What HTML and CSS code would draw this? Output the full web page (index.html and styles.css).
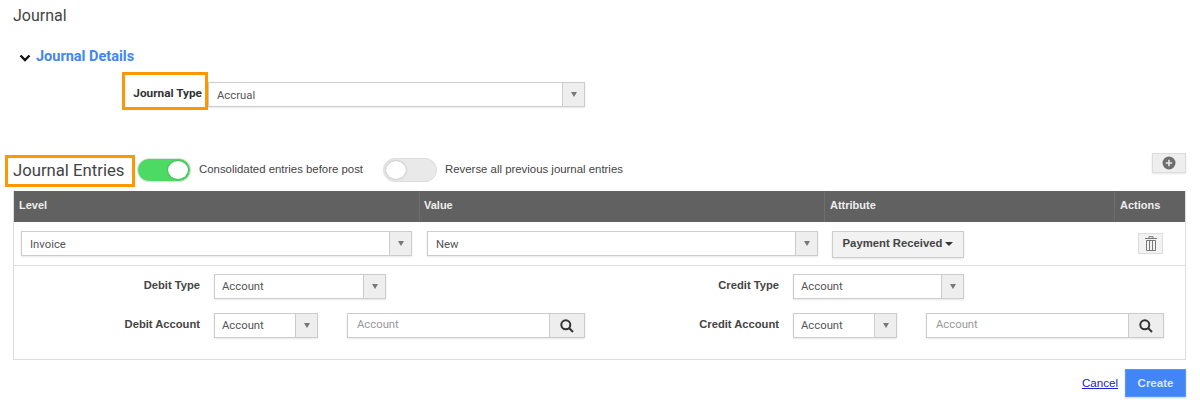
FILE: index.html
```html
<!DOCTYPE html>
<html lang="en">
<head>
<meta charset="utf-8">
<title>Journal</title>
<link rel="stylesheet" href="styles.css">
</head>
<body>
<main class="page">
  <h1 class="title">Journal</h1>
  <h2 class="section-title">
    <svg class="chevron" width="12" height="8" viewBox="0 0 12 8"><path d="M1.500 1.500 6 6l4.500-4.500" fill="none" stroke="#111" stroke-width="2.400"/></svg>
    <span>Journal Details</span>
  </h2>
  <div class="type-row">
    <label class="highlight type-label">Journal Type</label>
    <div class="select select-type"><span class="select-value">Accrual</span><span class="select-arrow"></span></div>
  </div>
  <div class="entries-head">
    <h2 class="highlight entries-title">Journal Entries</h2>
    <span class="toggle on"><span class="knob"></span></span>
    <span class="toggle-label first">Consolidated entries before post</span>
    <span class="toggle off"><span class="knob"></span></span>
    <span class="toggle-label">Reverse all previous journal entries</span>
    <button class="add-btn" type="button" aria-label="Add">
      <svg width="14" height="14" viewBox="0 0 14 14"><circle cx="7" cy="7" r="6.500" fill="#6e6e6e"/><path d="M7 3.800v6.400M3.800 7h6.400" stroke="#e8e8e8" stroke-width="1.600"/></svg>
    </button>
  </div>
  <section class="entries">
    <div class="thead">
      <div class="th col-level">Level</div>
      <div class="th col-value">Value</div>
      <div class="th col-attr">Attribute</div>
      <div class="th col-actions">Actions</div>
    </div>
    <div class="main-row">
      <div class="select select-level"><span class="select-value">Invoice</span><span class="select-arrow"></span></div>
      <div class="select select-level second"><span class="select-value">New</span><span class="select-arrow"></span></div>
      <button class="attr-btn" type="button">Payment Received<span class="caret"></span></button>
      <button class="trash-btn" type="button" aria-label="Delete">
        <svg width="12" height="15" viewBox="0 0 12 15" fill="none" stroke="#777"><path d="M0 2.500h12M4 2.500V.700h4v1.800" stroke-width="1"/><path d="M1.500 4.500h9v10h-9z" stroke-width="1"/><path d="M4.500 4.500v10M7.500 4.500v10" stroke-width="1"/></svg>
      </button>
    </div>
    <div class="details">
      <div class="field-row">
        <label class="field-label">Debit Type</label>
        <div class="select select-mid"><span class="select-value">Account</span><span class="select-arrow"></span></div>
      </div>
      <div class="field-row">
        <label class="field-label">Credit Type</label>
        <div class="select select-mid narrow"><span class="select-value">Account</span><span class="select-arrow"></span></div>
      </div>
      <div class="field-row">
        <label class="field-label">Debit Account</label>
        <div class="select select-small"><span class="select-value">Account</span><span class="select-arrow"></span></div>
        <div class="search"><span class="placeholder">Account</span><span class="search-btn"><svg width="14" height="14" viewBox="0 0 14 14" fill="none" stroke="#333" stroke-width="2"><circle cx="5.800" cy="5.800" r="4.500"/><path d="M9 9l4 4"/></svg></span></div>
      </div>
      <div class="field-row">
        <label class="field-label">Credit Account</label>
        <div class="select select-small"><span class="select-value">Account</span><span class="select-arrow"></span></div>
        <div class="search"><span class="placeholder">Account</span><span class="search-btn"><svg width="14" height="14" viewBox="0 0 14 14" fill="none" stroke="#333" stroke-width="2"><circle cx="5.800" cy="5.800" r="4.500"/><path d="M9 9l4 4"/></svg></span></div>
      </div>
    </div>
  </section>
  <footer class="actions">
    <a class="cancel" href="#">Cancel</a>
    <button class="create" type="button">Create</button>
  </footer>
</main>
</body>
</html>
```
FILE: styles.css
```css
* { box-sizing: border-box; }
html, body { margin: 0; background: #fff; }
body { width: 1200px; height: 403px; overflow: hidden; font-family: "Liberation Sans", Arial, sans-serif; color: #444; }
.page { padding-top: 7px; }
button { font-family: inherit; padding: 0; margin: 0; }

.title { margin: 0 0 0 13px; font: 400 16px/18px Roboto, sans-serif; color: #444; }

.section-title { margin: 23px 0 0 19px; height: 18px; display: flex; align-items: center; font: 700 14.500px/18px Roboto, sans-serif; color: #4285f4; }
.chevron { margin-right: 5px; margin-top: 1px; flex: none; }

.type-row { margin: 6px 0 0 122px; display: flex; align-items: flex-start; }
.highlight { border: 3px solid #ff9800; background: #fff; }
.type-label { width: 86px; height: 38px; display: flex; align-items: center; justify-content: flex-end; padding: 3px 3px 0 0; font: 700 11.800px/14px Roboto, sans-serif; color: #333; }

.select { display: flex; height: 25px; background: #fff; border: 1px solid #ccc; box-shadow: 0 1px 2px rgba(0,0,0,.1); }
.select-value { flex: 1; padding-left: 8px; font: 400 11.300px/23px Roboto, sans-serif; color: #555; }
.select-arrow { width: 22px; display: flex; align-items: center; justify-content: center; background: #eee; border-left: 1px solid #ccc; }
.select-arrow::after { content: ""; border: 3.500px solid transparent; border-top: 5px solid #777; border-bottom: 0; }
.select-type { width: 377px; margin-top: 10px; }
.select-type .select-value, .select-level .select-value { line-height: 25px; }
.select-mid .select-value, .select-small .select-value { padding-left: 7px; }

.entries-head { position: relative; margin: 43px 0 0 5px; height: 36px; display: flex; align-items: flex-start; }
.entries-title { margin: 2px 0 0; flex: none; width: 130px; height: 32px; padding-left: 5px; white-space: nowrap; font: 400 16.700px/26px Roboto, sans-serif; color: #444; }
.toggle { flex: none; width: 54px; height: 24px; margin: 5px 0 0; border-radius: 12px; display: flex; padding: 2px; }
.toggle.on { background: #4cd964; border: 1px solid #e2e2e2; justify-content: flex-end; margin-left: 2px; }
.toggle.off { background: #e9e9e9; border: 1px solid #ddd; margin-left: 20px; }
.knob { width: 20px; height: 18px; border-radius: 50%; background: #fff; box-shadow: 0 0 2px rgba(0,0,0,.35); }
.toggle-label { margin: 9px 0 0 8px; font: 400 11.400px/14px "Liberation Sans", Arial, sans-serif; color: #444; white-space: nowrap; }
.add-btn { position: absolute; left: 1147px; top: 0; width: 34px; height: 20px; background: #eee; border: 1px solid #ddd; box-shadow: 0 1px 2px rgba(0,0,0,.1); display: flex; align-items: center; justify-content: center; }

.entries { margin: 2px 14px 0 13px; height: 169px; border: 1px solid #ddd; border-top: 0; }
.thead { display: flex; height: 31px; background: #616161; }
.th { padding-left: 5px; font: 700 11px/28px "Liberation Sans", Arial, sans-serif; color: #eee; border-right: 1px solid #6e6e6e; }
.col-level { width: 406px; }
.col-value { width: 405px; padding-left: 4px; }
.col-attr { width: 290px; padding-left: 5px; }
.col-actions { flex: 1; border-right: 0; }

.main-row { height: 44px; padding: 9px 0 0 7px; display: flex; align-items: flex-start; border-bottom: 1px solid #ddd; }
.select-level { width: 391px; }
.select-level.second { margin-left: 15px; }
.attr-btn { margin: 0 0 0 14px; width: 132px; height: 27px; padding-bottom: 3px; background: #f2f2f2; border: 1px solid #ccc; box-shadow: 0 1px 2px rgba(0,0,0,.1); font-weight: 700; font-size: 11.300px; color: #444; }
.caret { display: inline-block; margin-left: 3px; vertical-align: middle; border: 4px solid transparent; border-top: 4px solid #333; border-bottom: 0; }
.trash-btn { margin: 2px 0 0 174px; width: 25px; height: 21px; background: #f2f2f2; border: 1px solid #ddd; display: flex; align-items: center; justify-content: center; }

.details { display: grid; grid-template-columns: 579px 579px; grid-auto-rows: 39px; padding-top: 8px; }
.field-row { display: flex; align-items: flex-start; }
.field-label { width: 186px; margin-right: 14px; text-align: right; font: 700 11.200px/22px "Liberation Sans", Arial, sans-serif; color: #444; }
.select-mid { width: 172px; }
.select-mid.narrow { width: 171px; }
.select-small { width: 104px; }
.search { margin-left: 29px; width: 238px; height: 25px; display: flex; background: #fff; border: 1px solid #ccc; box-shadow: 0 1px 2px rgba(0,0,0,.1); }
.placeholder { flex: 1; padding-left: 9px; font: 400 11.300px/21px Roboto, sans-serif; color: #999; }
.search-btn { width: 35px; display: flex; align-items: center; justify-content: center; background: #eee; border-left: 1px solid #ccc; }

.actions { margin: 9px 14px 0 0; display: flex; justify-content: flex-end; align-items: flex-start; }
.cancel { margin: 8px 7px 0 0; font: 400 11.600px/12px "Liberation Sans", Arial, sans-serif; color: #2020d0; }
.create { width: 61px; height: 28px; background: #4285f4; border: 1px solid #5b95f5; color: #d8e6fd; font-weight: 700; font-size: 11.500px; box-shadow: 0 1px 2px rgba(0,0,0,.2); }
```
